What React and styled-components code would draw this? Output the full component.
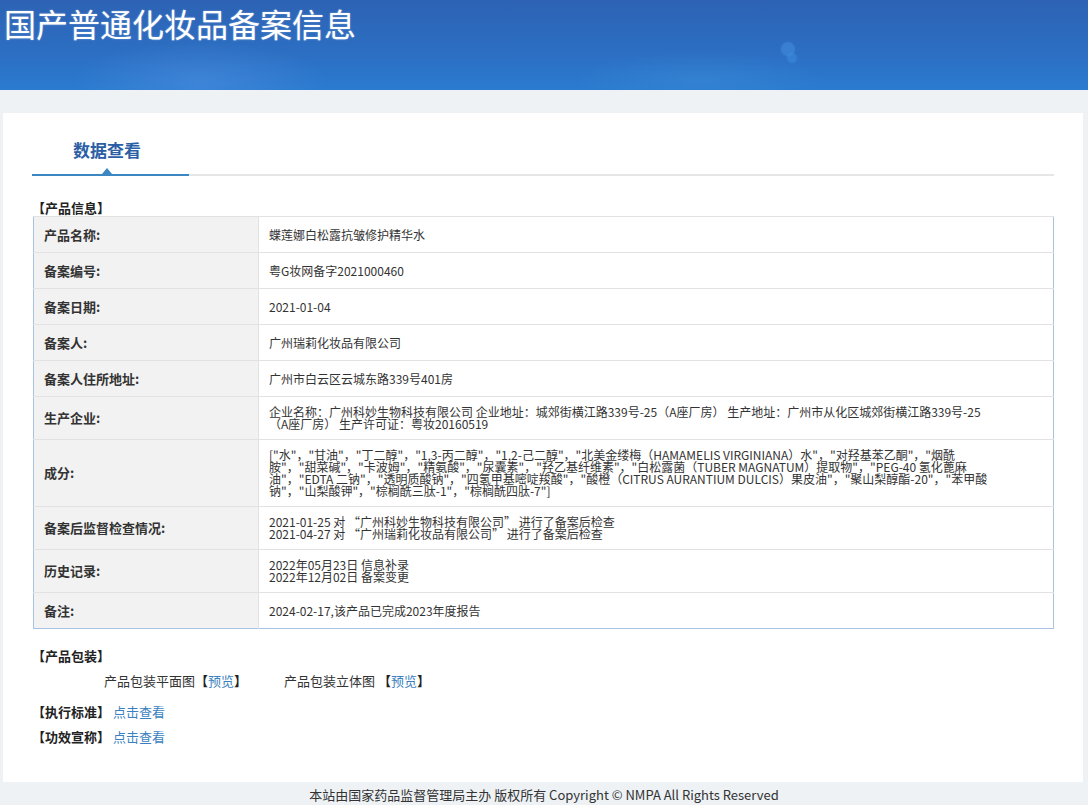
import React from 'react';
import styled, { createGlobalStyle } from 'styled-components';

const GlobalStyle = createGlobalStyle`
  html, body {
    margin: 0;
    padding: 0;
    background: #eef2f5;
    font-family: "Microsoft YaHei", "Noto Sans CJK SC", "Noto Sans", sans-serif;
    color: #333;
  }
`;

const Header = styled.header`
  height: 90px;
  background:
    radial-gradient(circle at 788px 49px, rgba(70, 145, 225, 0.5) 0, rgba(70, 145, 225, 0.5) 6px, transparent 8px),
    radial-gradient(circle at 792px 58px, rgba(65, 145, 230, 0.45) 0, rgba(65, 145, 230, 0.45) 4px, transparent 6px),
    radial-gradient(ellipse 180px 40px at 700px 80px, rgba(70, 150, 220, 0.3), transparent 70%),
    radial-gradient(ellipse 170px 55px at 200px 82px, rgba(90, 150, 230, 0.4), transparent 75%),
    linear-gradient(180deg, #2d62b4 0%, #2c6fc3 60%, #2a7bd0 100%);
`;

const Title = styled.h1`
  margin: 0;
  padding: 6px 0 0 4px;
  font-size: 32px;
  line-height: 34px;
  font-weight: normal;
  color: #fff;
  text-shadow: 0 0 2px rgba(255, 255, 255, 0.4);
`;

const Panel = styled.main`
  margin: 23px 5px 0 3px;
  background: #fff;
  padding: 0 29px 20px 29px;
  min-height: 669px;
  box-sizing: border-box;
`;

const TabBar = styled.div`
  display: flex;
  border-bottom: 2px solid #e6e6e6;
`;

const Tab = styled.div`
  position: relative;
  width: 150px;
  padding: 28px 7px 15px 0;
  margin-bottom: -2px;
  border-bottom: 2px solid #3b86c3;
  text-align: center;
  font-size: 17px;
  line-height: 18px;
  font-weight: bold;
  color: #2b5ea5;

  &::after {
    content: '';
    position: absolute;
    left: 70px;
    bottom: 0;
    border-left: 5px solid transparent;
    border-right: 5px solid transparent;
    border-bottom: 6px solid #3b86c3;
  }
`;

const SectionTitle = styled.div`
  margin-top: ${p => p.$top}px;
  font-size: 13px;
  line-height: 16px;
  font-weight: bold;
  color: #222;
`;

const InfoTable = styled.table`
  width: 1021px;
  margin-left: 1px;
  border-collapse: collapse;
  border: 1px solid #a9c2e3;
`;

const Row = styled.tr`
  border-top: 1px solid #e2e2e2;
`;

const Label = styled.td`
  width: 204px;
  height: 17px;
  padding: 9px 10px;
  background: #f2f2f2;
  border-right: 1px solid #e2e2e2;
  font-size: 13px;
  line-height: 12px;
  font-weight: bold;
  color: #333;
`;

const Value = styled.td`
  height: 17px;
  padding: 9px 10px;
  font-size: 12px;
  line-height: 12px;
  color: #333;
`;

const Line = styled.div`
  white-space: nowrap;
`;

const PackRow = styled.div`
  display: flex;
  margin-top: 9px;
  padding-left: 72px;
  font-size: 13px;
  line-height: 16px;
`;

const PackItem = styled.span`
  width: ${p => p.$w}px;
`;

const Bracket = styled.b`
  color: #222;
`;

const Link = styled.a`
  color: #3b7fc0;
  text-decoration: none;
  font-weight: normal;
`;

const LinkRow = styled.div`
  display: flex;
  gap: 3px;
  margin-top: ${p => p.$top}px;
  font-size: 13px;
  line-height: 16px;
`;

const Footer = styled.footer`
  height: 23px;
  text-align: center;
  font-size: 13px;
  line-height: 26px;
  color: #333;
`;

const rows = [
  ['产品名称:', ['蝶莲娜白松露抗皱修护精华水']],
  ['备案编号:', ['粤G妆网备字2021000460']],
  ['备案日期:', ['2021-01-04']],
  ['备案人:', ['广州瑞莉化妆品有限公司']],
  ['备案人住所地址:', ['广州市白云区云城东路339号401房']],
  ['生产企业:', [
    '企业名称：广州科妙生物科技有限公司 企业地址：城郊街横江路339号-25（A座厂房） 生产地址：广州市从化区城郊街横江路339号-25',
    '（A座厂房） 生产许可证：粤妆20160519',
  ]],
  ['成分:', [
    '["水"，"甘油"，"丁二醇"，"1,3-丙二醇"，"1,2-己二醇"，"北美金缕梅（HAMAMELIS VIRGINIANA）水"，"对羟基苯乙酮"，"烟酰',
    '胺"，"甜菜碱"，"卡波姆"，"精氨酸"，"尿囊素"，"羟乙基纤维素"，"白松露菌（TUBER MAGNATUM）提取物"，"PEG-40 氢化蓖麻',
    '油"，"EDTA 二钠"，"透明质酸钠"，"四氢甲基嘧啶羧酸"，"酸橙（CITRUS AURANTIUM DULCIS）果皮油"，"聚山梨醇酯-20"，"苯甲酸',
    '钠"，"山梨酸钾"，"棕榈酰三肽-1"，"棕榈酰四肽-7"]',
  ]],
  ['备案后监督检查情况:', [
    '2021-01-25 对 “广州科妙生物科技有限公司” 进行了备案后检查',
    '2021-04-27 对 “广州瑞莉化妆品有限公司” 进行了备案后检查',
  ]],
  ['历史记录:', ['2022年05月23日 信息补录', '2022年12月02日 备案变更']],
  ['备注:', ['2024-02-17,该产品已完成2023年度报告']],
];

export default function App() {
  return (
    <>
      <GlobalStyle />
      <Header>
        <Title>国产普通化妆品备案信息</Title>
      </Header>
      <Panel>
        <TabBar>
          <Tab>数据查看</Tab>
        </TabBar>
        <SectionTitle $top={24}>【产品信息】</SectionTitle>
        <InfoTable>
          <tbody>
            {rows.map(([label, lines]) => (
              <Row key={label}>
                <Label>{label}</Label>
                <Value>
                  {lines.map(l => <Line key={l}>{l}</Line>)}
                </Value>
              </Row>
            ))}
          </tbody>
        </InfoTable>
        <SectionTitle $top={19}>【产品包装】</SectionTitle>
        <PackRow>
          <PackItem $w={180}>产品包装平面图<Bracket>【</Bracket><Link href="#">预览</Link><Bracket>】</Bracket></PackItem>
          <PackItem $w={180}>产品包装立体图 <Bracket>【</Bracket><Link href="#">预览</Link><Bracket>】</Bracket></PackItem>
        </PackRow>
        <LinkRow $top={15}>
          <SectionTitle $top={0}>【执行标准】</SectionTitle>
          <Link href="#">点击查看</Link>
        </LinkRow>
        <LinkRow $top={9}>
          <SectionTitle $top={0}>【功效宣称】</SectionTitle>
          <Link href="#">点击查看</Link>
        </LinkRow>
      </Panel>
      <Footer>本站由国家药品监督管理局主办 版权所有 Copyright © NMPA All Rights Reserved</Footer>
    </>
  );
}
